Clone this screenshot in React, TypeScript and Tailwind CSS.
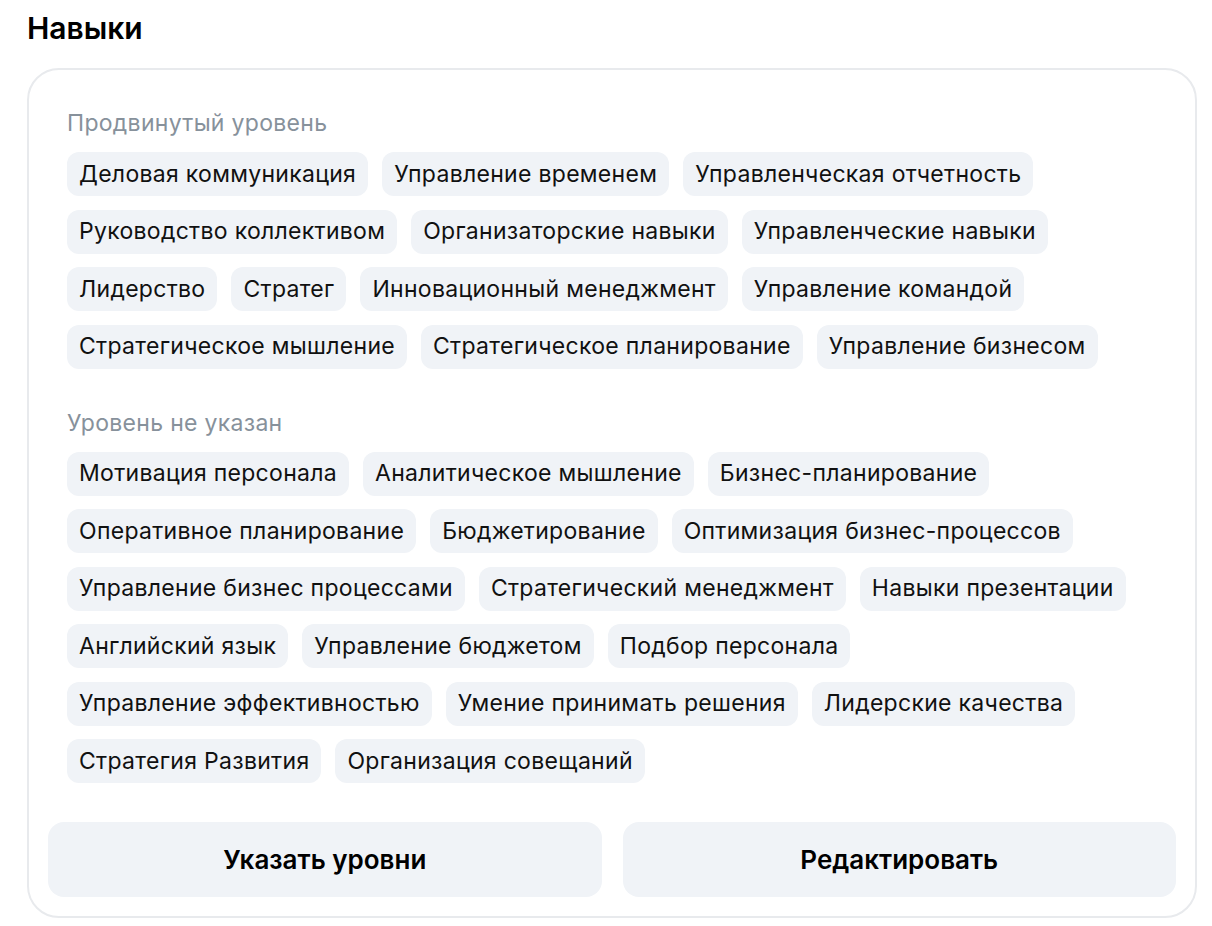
const advanced = [
  'Деловая коммуникация',
  'Управление временем',
  'Управленческая отчетность',
  'Руководство коллективом',
  'Организаторские навыки',
  'Управленческие навыки',
  'Лидерство',
  'Стратег',
  'Инновационный менеджмент',
  'Управление командой',
  'Стратегическое мышление',
  'Стратегическое планирование',
  'Управление бизнесом',
];

const unspecified = [
  'Мотивация персонала',
  'Аналитическое мышление',
  'Бизнес-планирование',
  'Оперативное планирование',
  'Бюджетирование',
  'Оптимизация бизнес-процессов',
  'Управление бизнес процессами',
  'Стратегический менеджмент',
  'Навыки презентации',
  'Английский язык',
  'Управление бюджетом',
  'Подбор персонала',
  'Управление эффективностью',
  'Умение принимать решения',
  'Лидерские качества',
  'Стратегия Развития',
  'Организация совещаний',
];

function SkillGroup({ title, skills }: { title: string; skills: string[] }) {
  return (
    <div>
      <div className="text-[23px] leading-[28px] tracking-[0.3px] text-[#87919b]">{title}</div>
      <div className="mt-[15px] flex flex-wrap gap-x-[14px] gap-y-[13.5px]">
        {skills.map((s) => (
          <span
            key={s}
            className="h-[44px] px-[12px] flex items-center rounded-[12px] bg-[#f0f3f7] text-[23px] tracking-[0.3px] text-[#111]"
          >
            {s}
          </span>
        ))}
      </div>
    </div>
  );
}

export default function App() {
  return (
    <div className="min-h-screen bg-white px-[27px] pt-[9px] font-['Inter',sans-serif]">
      <h2 className="text-[30px] leading-[38px] font-semibold text-black">Навыки</h2>
      <div className="mt-[21px] w-[1170px] rounded-[32px] border-2 border-[#e8eaed] px-[19px] pt-[39px] pb-[19px]">
        <div className="px-[19px] flex flex-col gap-[40px]">
          <SkillGroup title="Продвинутый уровень" skills={advanced} />
          <SkillGroup title="Уровень не указан" skills={unspecified} />
        </div>
        <div className="mt-[39px] grid grid-cols-2 gap-[21px]">
          <button className="h-[75px] rounded-[16px] bg-[#f0f3f7] text-[26px] font-semibold text-black">
            Указать уровни
          </button>
          <button className="h-[75px] rounded-[16px] bg-[#f0f3f7] text-[26px] font-semibold text-black">
            Редактировать
          </button>
        </div>
      </div>
    </div>
  );
}
